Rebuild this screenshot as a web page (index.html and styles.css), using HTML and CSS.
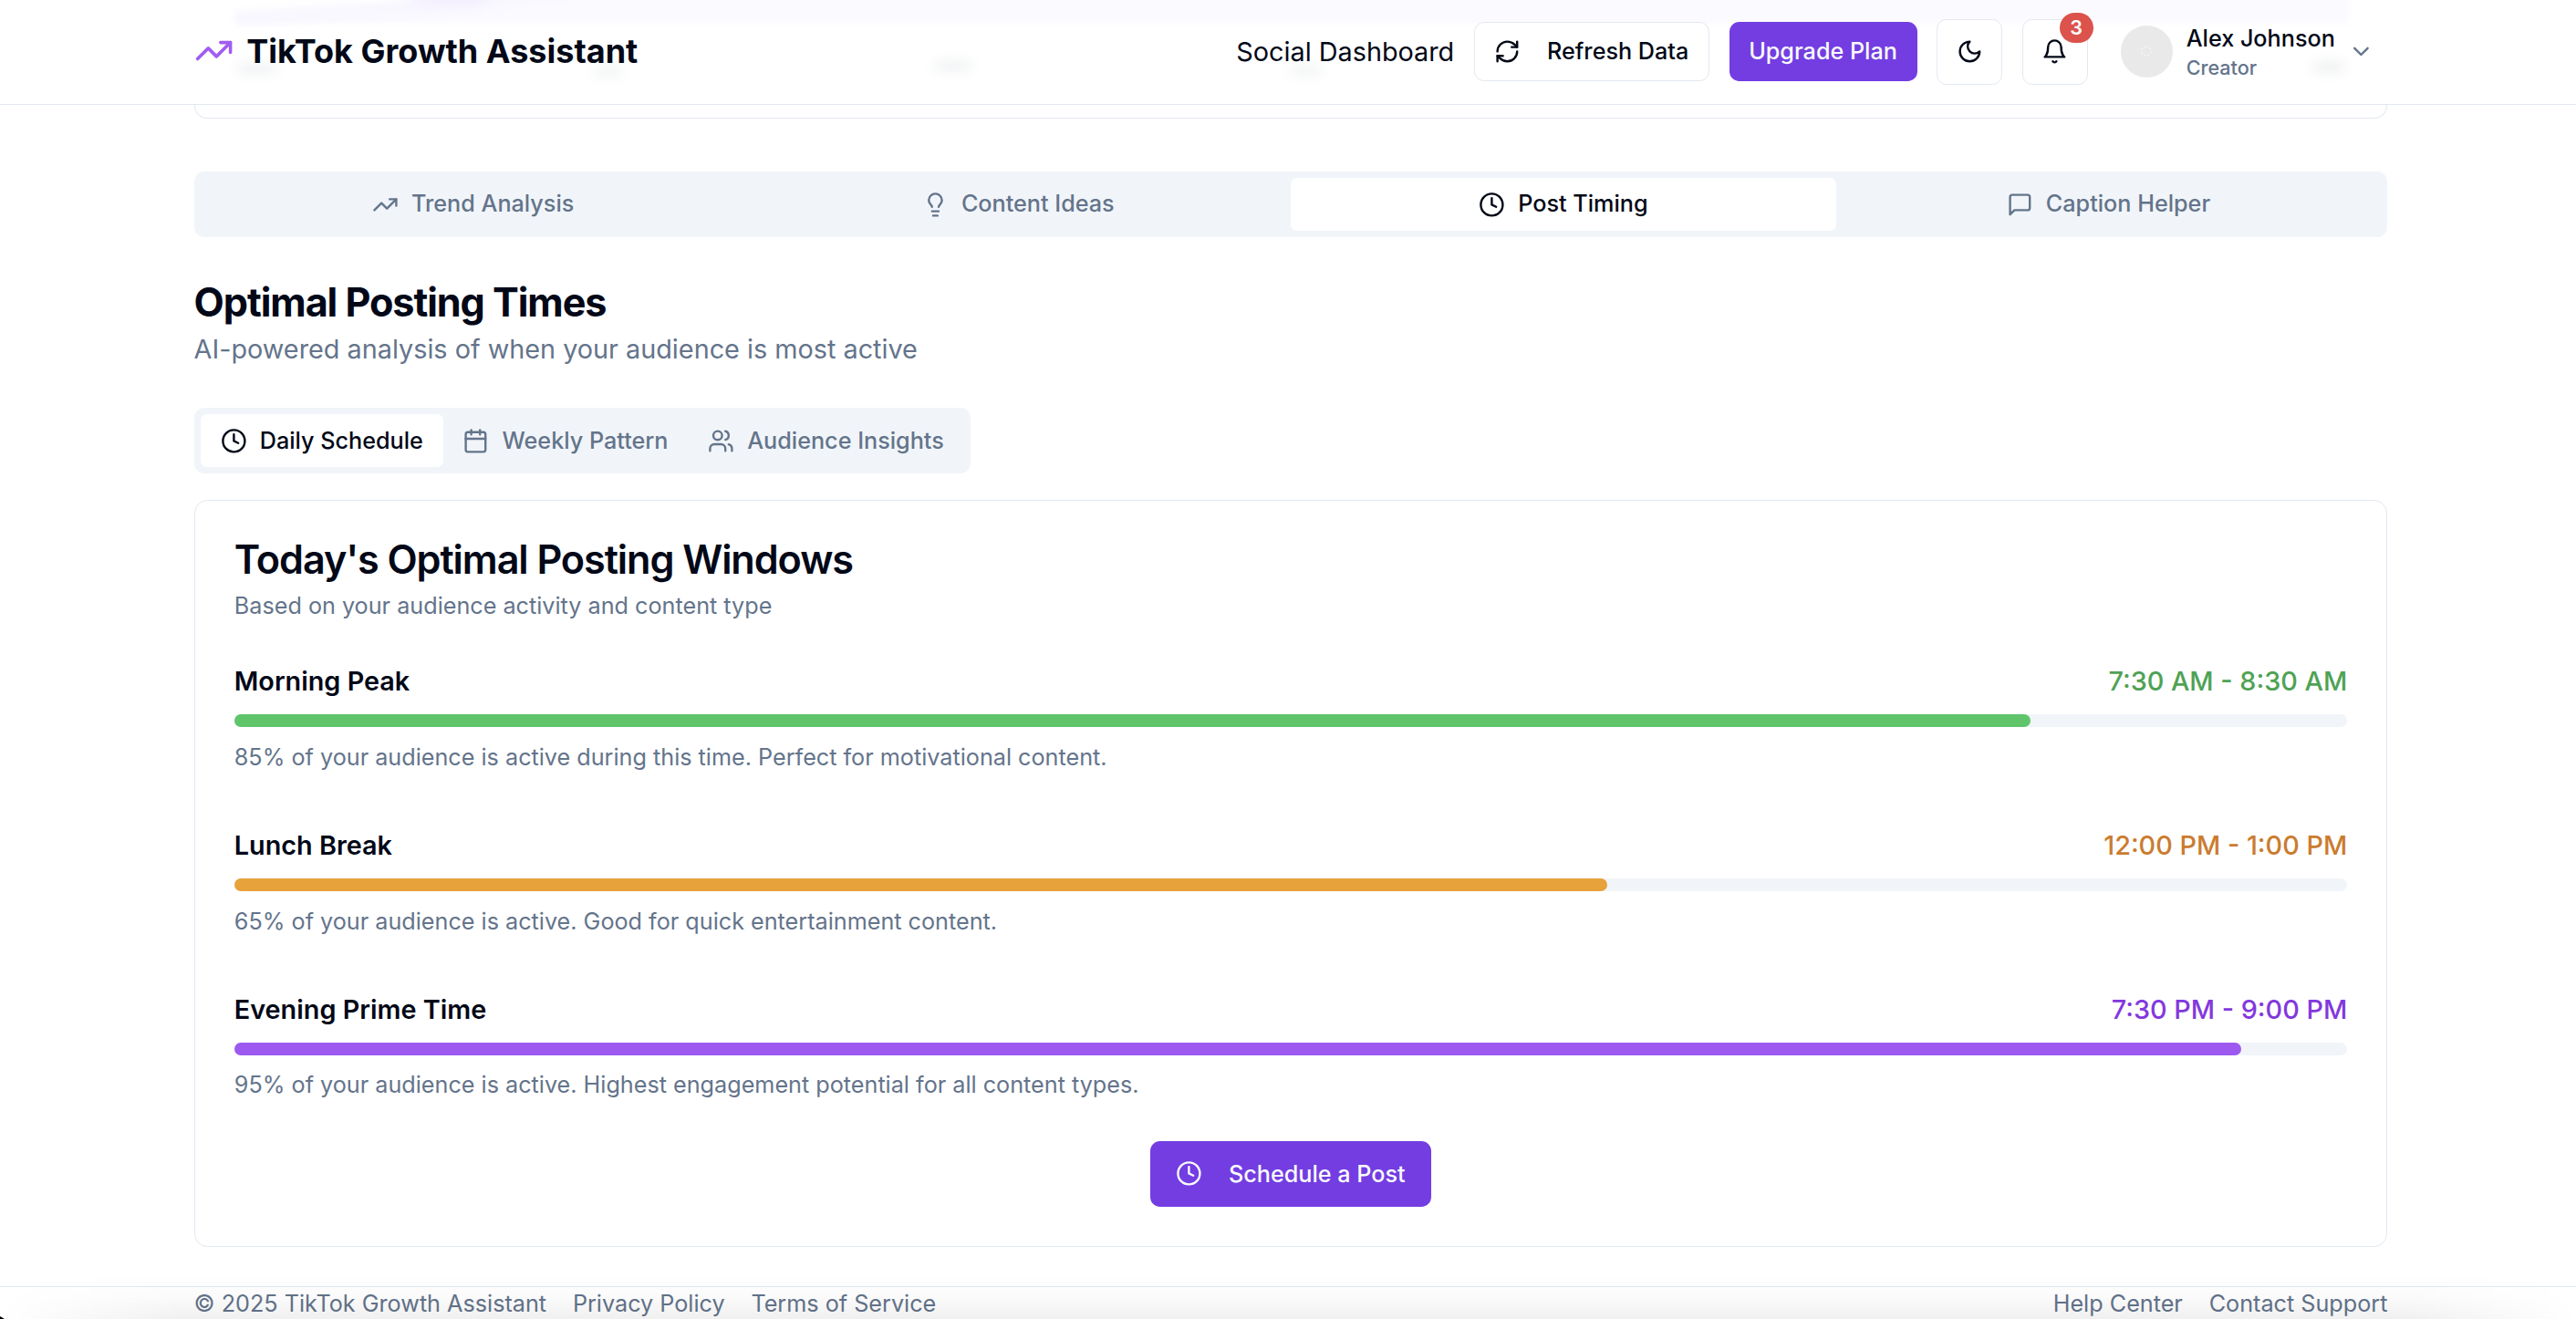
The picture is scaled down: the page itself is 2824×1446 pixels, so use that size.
FILE: index.html
```
<!DOCTYPE html>
<html lang="en">
<head>
    <meta charset="UTF-8">
    <title>TikTok Growth Assistant</title>
    <link rel="stylesheet" href="styles.css">
</head>
<body>
<svg class="sprite">
    <symbol id="i-trend" viewBox="0 0 24 24"><path d="M22 7l-8.5 8.5-5-5L2 17"/><path d="M16 7h6v6"/></symbol>
    <symbol id="i-clock" viewBox="0 0 24 24"><circle cx="12" cy="12" r="10"/><path d="M12 6v6l4 2"/></symbol>
    <symbol id="i-bulb" viewBox="0 0 24 24"><path d="M15 14c.2-1 .7-1.7 1.5-2.5 1-.9 1.5-2.2 1.5-3.5A6 6 0 0 0 6 8c0 1 .2 2.2 1.5 3.5.7.7 1.3 1.5 1.5 2.5"/><path d="M9 18h6M10 22h4"/></symbol>
    <symbol id="i-message" viewBox="0 0 24 24"><path d="M21 15a2 2 0 0 1-2 2H7l-4 4V5a2 2 0 0 1 2-2h14a2 2 0 0 1 2 2z"/></symbol>
    <symbol id="i-calendar" viewBox="0 0 24 24"><path d="M8 2v4M16 2v4M3 10h18"/><rect x="3" y="4" width="18" height="18" rx="2"/></symbol>
    <symbol id="i-users" viewBox="0 0 24 24"><path d="M16 21v-2a4 4 0 0 0-4-4H6a4 4 0 0 0-4 4v2"/><circle cx="9" cy="7" r="4"/><path d="M22 21v-2a4 4 0 0 0-3-3.87M16 3.13a4 4 0 0 1 0 7.75"/></symbol>
    <symbol id="i-refresh" viewBox="0 0 24 24"><path d="M3 12a9 9 0 0 1 9-9 9.75 9.75 0 0 1 6.74 2.74L21 8"/><path d="M21 3v5h-5"/><path d="M21 12a9 9 0 0 1-9 9 9.75 9.75 0 0 1-6.74-2.74L3 16"/><path d="M8 16H3v5"/></symbol>
    <symbol id="i-moon" viewBox="0 0 24 24"><path d="M12 3a6 6 0 0 0 9 9 9 9 0 1 1-9-9Z"/></symbol>
    <symbol id="i-bell" viewBox="0 0 24 24"><path d="M6 8a6 6 0 0 1 12 0c0 7 3 9 3 9H3s3-2 3-9"/><path d="M10.3 21a1.94 1.94 0 0 0 3.4 0"/></symbol>
    <symbol id="i-down" viewBox="0 0 24 24"><path d="M6 9l6 6 6-6"/></symbol>
</svg>

<header class="header">
    <!-- scrolled chart showing softly through the header -->
    <svg class="header-glow" viewBox="0 0 2824 114">
        <path class="glow-area" d="M258 16L500 2L600-20H2575V26H258z"/>
        <path class="glow-line" d="M258 20L500 4L620-12"/>
        <ellipse class="glow-spot" cx="490" cy="-4" rx="45" ry="6"/>
        <g class="glow-labels">
            <rect x="260" y="71" width="42" height="9"/>
            <rect x="652" y="74" width="30" height="8"/>
            <rect x="1026" y="68" width="38" height="9"/>
            <rect x="1416" y="73" width="32" height="8"/>
            <rect x="2537" y="68" width="32" height="11"/>
        </g>
    </svg>
    <div class="container header-row">
        <div class="logo"><svg class="icon logo-icon"><use href="#i-trend"/></svg>TikTok Growth Assistant</div>
        <nav class="actions">
            <a class="nav-link">Social Dashboard</a>
            <button class="btn btn-outline"><svg class="icon"><use href="#i-refresh"/></svg>Refresh Data</button>
            <button class="btn btn-primary">Upgrade Plan</button>
            <button class="btn btn-icon"><svg class="icon"><use href="#i-moon"/></svg></button>
            <button class="btn btn-icon"><svg class="icon"><use href="#i-bell"/></svg><span class="badge">3</span></button>
            <div class="user">
                <span class="avatar"><i></i></span>
                <div class="user-text">
                    <div class="user-name">Alex Johnson</div>
                    <div class="user-role">Creator</div>
                </div>
                <svg class="icon muted"><use href="#i-down"/></svg>
            </div>
        </nav>
    </div>
</header>

<main class="container">
    <div class="prev-card"></div>
    <div class="tabs tabs-main">
        <div class="tab"><svg class="icon"><use href="#i-trend"/></svg>Trend Analysis</div>
        <div class="tab"><svg class="icon"><use href="#i-bulb"/></svg>Content Ideas</div>
        <div class="tab active"><svg class="icon"><use href="#i-clock"/></svg>Post Timing</div>
        <div class="tab"><svg class="icon"><use href="#i-message"/></svg>Caption Helper</div>
    </div>

    <h2 class="title">Optimal Posting Times</h2>
    <p class="subtitle">AI-powered analysis of when your audience is most active</p>

    <div class="tabs tabs-sub">
        <div class="tab active"><svg class="icon"><use href="#i-clock"/></svg>Daily Schedule</div>
        <div class="tab"><svg class="icon"><use href="#i-calendar"/></svg>Weekly Pattern</div>
        <div class="tab"><svg class="icon"><use href="#i-users"/></svg>Audience Insights</div>
    </div>

    <section class="card">
        <h3 class="card-title">Today's Optimal Posting Windows</h3>
        <p class="card-desc">Based on your audience activity and content type</p>
        <div class="windows">
            <div class="window green">
                <div class="window-head"><span class="name">Morning Peak</span><span class="time">7:30 AM - 8:30 AM</span></div>
                <div class="track"><div class="bar" style="width:85%"></div></div>
                <p class="note">85% of your audience is active during this time. Perfect for motivational content.</p>
            </div>
            <div class="window orange">
                <div class="window-head"><span class="name">Lunch Break</span><span class="time">12:00 PM - 1:00 PM</span></div>
                <div class="track"><div class="bar" style="width:65%"></div></div>
                <p class="note">65% of your audience is active. Good for quick entertainment content.</p>
            </div>
            <div class="window purple">
                <div class="window-head"><span class="name">Evening Prime Time</span><span class="time">7:30 PM - 9:00 PM</span></div>
                <div class="track"><div class="bar" style="width:95%"></div></div>
                <p class="note">95% of your audience is active. Highest engagement potential for all content types.</p>
            </div>
        </div>
        <div class="card-foot">
            <button class="btn btn-primary btn-lg"><svg class="icon"><use href="#i-clock"/></svg>Schedule a Post</button>
        </div>
    </section>
</main>

<footer class="footer">
    <div class="container footer-row">
        <div class="links"><span>© 2025 TikTok Growth Assistant</span><a>Privacy Policy</a><a>Terms of Service</a></div>
        <div class="links"><a>Help Center</a><a>Contact Support</a></div>
    </div>
</footer>
<div class="bottom-shade"></div>
<div class="corner"></div>
</body>
</html>
```
FILE: styles.css
```
*{margin:0;padding:0;box-sizing:border-box;}
html{font-size:28.8px;}
body{
    height:100vh;
    overflow:hidden;
    background:#fff;
    color:#020817;
    font-family:Inter,"Liberation Sans",sans-serif;
    line-height:1.5;
}
h2,h3{font-weight:600;}
.sprite{display:none;}
.icon{
    flex:none;
    width:1rem;
    height:1rem;
    fill:none;
    stroke:currentColor;
    stroke-width:2;
    stroke-linecap:round;
    stroke-linejoin:round;
}
.muted{color:#64748b;}
.container{
    width:2404.8px;
    margin-left:212.6px;
}

/* header */
.header{
    position:relative;
    height:4rem;
    border-bottom:1px solid #e2e8f0;
}
.header-glow{
    position:absolute;
    left:0;
    top:0;
    width:2824px;
    height:114px;
}
.glow-area{fill:#fbfaff;filter:blur(3px);}
.glow-line{fill:none;stroke:#f7f5fe;stroke-width:11;filter:blur(6px);}
.glow-spot{fill:#efe6fd;filter:blur(7px);}
.glow-labels{fill:#eceeef;filter:blur(7px);}
.header-row{
    position:relative;
    display:flex;
    align-items:center;
    justify-content:space-between;
    height:113px;
}
.logo{
    display:flex;
    align-items:center;
    gap:.5rem;
    padding-bottom:1px;
    font-size:1.25rem;
    font-weight:700;
}
.logo-icon{
    width:1.5rem;
    height:1.5rem;
    color:#a15cf1;
}
.actions{
    display:flex;
    align-items:center;
    gap:.75rem;
}
.btn{
    display:flex;
    align-items:center;
    justify-content:center;
    height:2.25rem;
    padding:0 .75rem;
    border:none;
    border-radius:.375rem;
    background:#fff;
    color:#020817;
    font-family:inherit;
    font-size:.875rem;
    font-weight:500;
    white-space:nowrap;
}
.btn-outline{
    gap:1rem;
    border:1px solid #e2e8f0;
}
.btn-primary{
    background:#733de2;
    color:#f8fafc;
}
.btn-icon{
    position:relative;
    width:2.5rem;
    height:2.5rem;
    padding:0;
    border:1px solid #e2e8f0;
}
.btn-lg{
    gap:1rem;
    height:2.5rem;
    padding:0 1rem;
}
.badge{
    position:absolute;
    right:-7px;
    top:-8px;
    width:37px;
    height:33px;
    border-radius:17px;
    background:#dc524c;
    color:#fff;
    font-size:.75rem;
    font-weight:600;
    line-height:33px;
    text-align:center;
}
.user{
    display:flex;
    align-items:center;
    gap:.5rem;
    padding:0 .5rem;
}
.avatar{
    display:flex;
    align-items:center;
    justify-content:center;
    width:2rem;
    height:2rem;
    border-radius:50%;
    background:#e9e9e9;
}
.avatar i{
    width:12px;
    height:12px;
    border:2px dotted #f3f3f3;
    border-radius:50%;
}
.user-name{
    font-size:.875rem;
    font-weight:500;
    line-height:1.25rem;
}
.user-role{
    color:#64748b;
    font-size:.75rem;
    font-weight:500;
    line-height:1rem;
}

/* tabs */
.prev-card{
    height:15.1px;
    border:1px solid #e2e8f0;
    border-top:none;
    border-radius:0 0 14px 14px;
}
.tabs{
    height:2.5rem;
    padding:.25rem;
    border-radius:.375rem;
    background:#f1f5f9;
    color:#64748b;
}
.tabs-main{
    display:grid;
    grid-template-columns:repeat(4,1fr);
    margin-top:2rem;
}
.tabs-sub{
    display:inline-flex;
    margin-top:1.5rem;
    vertical-align:top;
}
.tab{
    display:flex;
    align-items:center;
    justify-content:center;
    gap:.5rem;
    padding:1px .75rem 0;
    border-radius:.25rem;
    font-size:.875rem;
    font-weight:500;
}
.tabs-sub .tab{padding:1px 21.75px 0;}
.tab.active{
    background:#fff;
    color:#020817;
}

.title{
    margin-top:1.5rem;
    font-size:1.5rem;
    font-weight:700;
    line-height:2rem;
    letter-spacing:-.025em;
}
.subtitle{color:#64748b;}

/* schedule card */
.card{
    margin-top:1rem;
    padding:1.5rem;
    border:1px solid #e2e8f0;
    border-radius:.5rem;
}
.card-title{
    font-size:1.5rem;
    line-height:1;
    letter-spacing:-.025em;
}
.card-desc{
    margin-top:.375rem;
    color:#64748b;
    font-size:.875rem;
    line-height:1.25rem;
}
.windows{
    display:flex;
    flex-direction:column;
    gap:2rem;
    margin-top:1.5rem;
}
.window{
    display:flex;
    flex-direction:column;
    gap:.5rem;
}
.window-head{
    display:flex;
    justify-content:space-between;
}
.name{font-weight:600;}
.time{font-weight:500;}
.track{
    height:.5rem;
    border-radius:.25rem;
    background:#f1f5f9;
}
.bar{
    height:100%;
    border-radius:.25rem;
}
.green .time{color:#4fa254;}
.green .bar{background:#60c46b;}
.orange .time{color:#ca7c30;}
.orange .bar{background:#e7a23c;}
.purple .time{color:#8338dd;}
.purple .bar{background:#9d59ef;}
.note{
    color:#64748b;
    font-size:.875rem;
    line-height:1.25rem;
}
.card-foot{
    display:flex;
    justify-content:center;
    margin-top:1.5rem;
}

/* footer */
.footer{
    margin-top:1.5rem;
    border-top:1px solid #e2e8f0;
}
.footer-row{
    display:flex;
    justify-content:space-between;
    color:#64748b;
    font-size:.875rem;
    line-height:1.25rem;
}
.links{
    display:flex;
    gap:1rem;
}
.bottom-shade{
    position:fixed;
    left:0;
    right:0;
    bottom:0;
    height:50px;
    background:linear-gradient(to bottom,rgba(0,0,0,0),rgba(0,0,0,.015) 50%,rgba(0,0,0,.06));
    -webkit-mask-image:linear-gradient(to right,transparent,#000 200px,#000 2640px,transparent);
    mask-image:linear-gradient(to right,transparent,#000 200px,#000 2640px,transparent);
}
.corner{
    position:fixed;
    left:0;
    bottom:0;
    width:5px;
    height:3px;
    background:#000;
    clip-path:polygon(0 0,100% 100%,0 100%);
}
```
